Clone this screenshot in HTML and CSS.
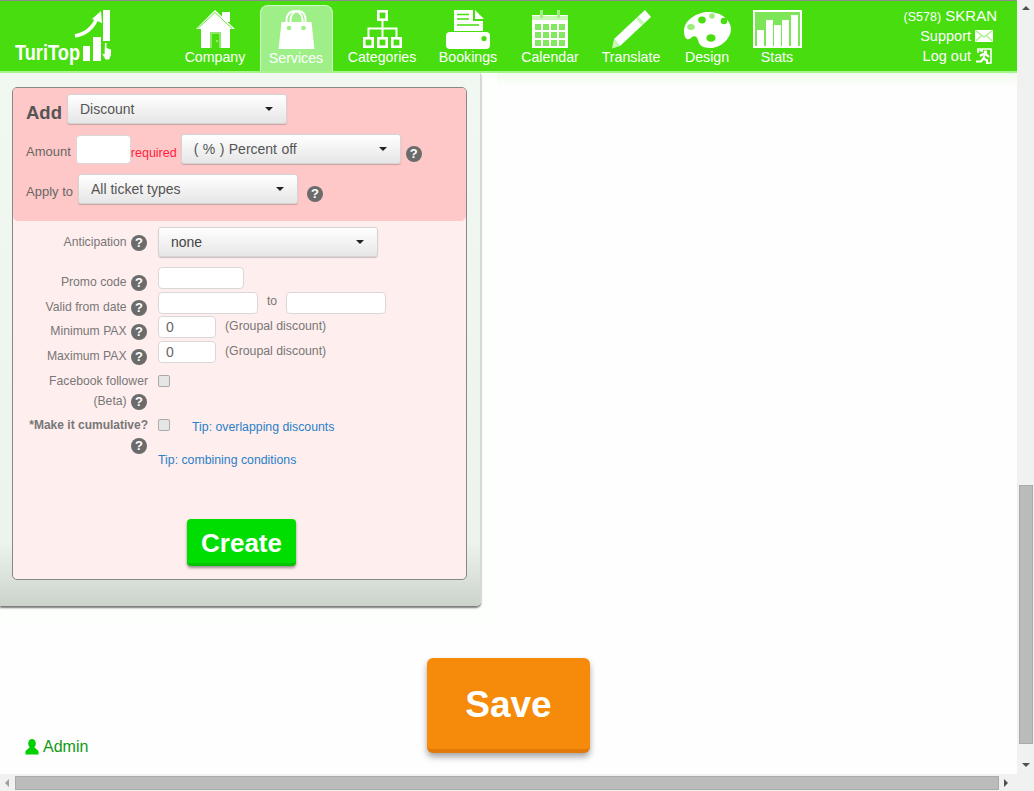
FILE: index.html
```html
<!DOCTYPE html>
<html lang="en">
<head>
    <meta charset="UTF-8">
    <title>TuriTop - Services</title>
    <link rel="stylesheet" href="styles.css">
</head>
<body>
<div class="window">
    <div class="page">
        <header class="topbar">
            <a class="logo">
                <svg width="100" height="60" viewBox="14 7 100 60">
                    <text x="15" y="59.500" textLength="65" lengthAdjust="spacingAndGlyphs" class="logo-text">TuriTop</text>
                    <rect x="83" y="46" width="7" height="15" fill="#fff"/>
                    <rect x="93" y="37" width="8" height="24" fill="#fff"/>
                    <rect x="103" y="10" width="7" height="31" fill="#fff"/>
                    <path d="M75 36C86 34 93 28 97 18" fill="none" stroke="#fff" stroke-width="3.500"/>
                    <path d="M92 19L101 11L102 23Z" fill="#fff"/>
                    <path d="M105 43h1.500v5l4.500 1.500V55l-2 4.500h-3.500l-3.500-6 2.500 1Z" fill="#fff"/>
                </svg>
            </a>
            <nav class="mainnav">
                <a class="navitem">
                    <svg width="60" height="40" viewBox="185 9 60 40">
                        <rect x="222" y="12" width="8" height="10" fill="#fff"/>
                        <path d="M215 10L235 29H196Z" fill="#fff"/>
                        <path d="M198 28.500L215 12.500L232 28.500" fill="none" stroke="#47dd0e" stroke-width=".8"/>
                        <rect x="201" y="29" width="29" height="19" fill="#fff"/>
                        <rect x="210" y="32" width="11" height="16" fill="#8fe86c"/>
                        <rect x="212" y="34" width="7" height="14" fill="#47dd0e"/>
                        <circle cx="217" cy="41" r=".8" fill="#fff"/>
                    </svg>
                    <span>Company</span>
                </a>
                <a class="navitem navitem-active">
                    <svg width="60" height="40" viewBox="266.500 9 60 40">
                        <path d="M287 24V20C287 14 291 11 295 11C299 11 303 14 303 20V24" fill="none" stroke="#fff" stroke-width="2"/>
                        <path d="M291 24V20C291 14 295 11 299 11C303 11 306 14 306 20V24" fill="none" stroke="#fff" stroke-width="2"/>
                        <path d="M282 22H312L315 50H279Z" fill="#fff"/>
                        <circle cx="289.500" cy="28" r="2.300" fill="#9fef88"/>
                        <circle cx="304" cy="28" r="2.300" fill="#9fef88"/>
                    </svg>
                    <span>Services</span>
                </a>
                <a class="navitem">
                    <svg width="60" height="40" viewBox="352 9 60 40">
                        <g fill="none" stroke="#fff" stroke-width="2.600">
                            <rect x="378.300" y="11.300" width="8.400" height="8.400"/>
                            <rect x="364.300" y="38.300" width="8.400" height="8.400"/>
                            <rect x="378.300" y="38.300" width="8.400" height="8.400"/>
                            <rect x="392.300" y="38.300" width="8.400" height="8.400"/>
                        </g>
                        <path d="M382.500 21V37M368.500 37V28.500H396.500V37" fill="none" stroke="#fff" stroke-width="2"/>
                    </svg>
                    <span>Categories</span>
                </a>
                <a class="navitem">
                    <svg width="60" height="40" viewBox="438 9 60 40">
                        <path d="M454 10H473V21H483V31H454Z" fill="#fff"/>
                        <path d="M475 10L484 19H475Z" fill="#fff"/>
                        <path d="M457 14.500H469M457 19H469M457 25H479" stroke="#47dd0e" stroke-width="1.500"/>
                        <rect x="446" y="32" width="44" height="17" rx="4" fill="#fff"/>
                        <circle cx="484" cy="38.500" r="2.600" fill="#47dd0e"/>
                    </svg>
                    <span>Bookings</span>
                </a>
                <a class="navitem">
                    <svg width="60" height="40" viewBox="520 9 60 40">
                        <rect x="532" y="15" width="36" height="33" fill="#fff"/>
                        <rect x="532" y="16" width="36" height="4" fill="#c8f7b6"/>
                        <rect x="540" y="10" width="3" height="8" fill="#a4ee88"/>
                        <rect x="557" y="10" width="3" height="8" fill="#a4ee88"/>
                        <g fill="#84e760">
                            <rect x="535" y="24" width="6" height="6"/><rect x="543" y="24" width="6" height="6"/><rect x="551" y="24" width="6" height="6"/><rect x="559" y="24" width="6" height="6"/>
                            <rect x="535" y="32" width="6" height="6"/><rect x="543" y="32" width="6" height="6"/><rect x="551" y="32" width="6" height="6"/><rect x="559" y="32" width="6" height="6"/>
                            <rect x="535" y="40" width="6" height="6"/><rect x="543" y="40" width="6" height="6"/><rect x="551" y="40" width="6" height="6"/><rect x="559" y="40" width="6" height="6"/>
                        </g>
                    </svg>
                    <span>Calendar</span>
                </a>
                <a class="navitem">
                    <svg width="60" height="40" viewBox="601 9 60 40">
                        <path d="M645 10L651 17L620 46L614 39Z" fill="#fff"/>
                        <path d="M638.500 16.500L644.500 23L642 25.500L636 19Z" fill="#c8f7b6"/>
                        <path d="M614 39L620 46L612 48.500Z" fill="#c8f7b6"/>
                    </svg>
                    <span>Translate</span>
                </a>
                <a class="navitem">
                    <svg width="60" height="40" viewBox="677 9 60 40">
                        <path d="M684 31C684 20 697 12 709 12C722 12 731 21 731 29C731 39 720 48 711 48C702 48 699 45 698 40C697 36 694 35 691 38C688 41 684 39 684 31Z" fill="#fff"/>
                        <ellipse cx="702" cy="20" rx="3.800" ry="3.400" fill="#47dd0e"/>
                        <circle cx="712" cy="16" r="2.800" fill="#9bec7c"/>
                        <circle cx="724" cy="21" r="3.300" fill="#47dd0e"/>
                        <ellipse cx="691" cy="27" rx="3.800" ry="3" fill="#9bec7c"/>
                        <ellipse cx="711" cy="38" rx="4.600" ry="3.800" fill="#47dd0e"/>
                    </svg>
                    <span>Design</span>
                </a>
                <a class="navitem">
                    <svg width="60" height="40" viewBox="747 9 60 40">
                        <rect x="754" y="11" width="47" height="36" fill="#7ce558" stroke="#fff" stroke-width="2"/>
                        <g fill="#fff">
                            <rect x="757" y="30" width="7" height="16"/>
                            <rect x="766" y="20" width="7" height="26"/>
                            <rect x="774" y="25" width="7" height="21"/>
                            <rect x="782" y="20" width="7" height="26"/>
                            <rect x="791" y="15" width="7" height="31"/>
                        </g>
                    </svg>
                    <span>Stats</span>
                </a>
            </nav>
            <div class="userbox">
                <div><span class="usercode">(S578)</span> SKRAN</div>
                <a class="userlink userlink-first">Support
                    <svg width="18" height="12" viewBox="0 0 18 12">
                        <rect width="18" height="12" rx="1" fill="#fff"/>
                        <path d="M1 1L9 7L17 1M1 11L6.500 5.500M17 11L11.500 5.500" fill="none" stroke="#a6f08a" stroke-width="1.200"/>
                    </svg>
                </a>
                <a class="userlink">Log out
                    <svg width="18" height="16" viewBox="0 0 18 16">
                        <path d="M3 5V1H16V15H12" fill="none" stroke="#fff" stroke-width="1.600"/>
                        <path d="M3 3L8 1V4Z" fill="#fff"/>
                        <circle cx="10.500" cy="4" r="1.800" fill="#fff"/>
                        <path d="M5 8L8 6H11L14 9M10 6L8.500 10.500L12 12.500V16M8.500 10.500L6 13.500H1" fill="none" stroke="#fff" stroke-width="2.200"/>
                    </svg>
                </a>
            </div>
        </header>

        <main class="content">
            <div class="panel-wrap">
                <section class="panel">
                    <form class="addform">
                        <div class="addform-top">
                            <div class="toprow">
                                <span class="add-title">Add</span>
                                <div class="select">Discount<i class="caret"></i></div>
                            </div>
                            <div class="toprow">
                                <label class="toplabel">Amount</label>
                                <input class="input input-amount" type="text">
                                <span class="required">required</span>
                                <div class="select select-percent">(&nbsp;%&nbsp;)&nbsp;Percent off<i class="caret"></i></div>
                                <span class="help help-top">?</span>
                            </div>
                            <div class="toprow">
                                <label class="toplabel">Apply to</label>
                                <div class="select">All ticket types<i class="caret"></i></div>
                                <span class="help help-apply">?</span>
                            </div>
                        </div>

                        <div class="addform-body">
                            <div class="row row-anticipation">
                                <div class="rowlabel">Anticipation <span class="help">?</span></div>
                                <div class="select select-dark">none<i class="caret"></i></div>
                            </div>
                            <div class="row row-promo">
                                <div class="rowlabel">Promo code <span class="help">?</span></div>
                                <input class="input input-code" type="text">
                            </div>
                            <div class="row">
                                <div class="rowlabel">Valid from date <span class="help">?</span></div>
                                <input class="input input-date" type="text">
                                <span class="to">to</span>
                                <input class="input input-date" type="text">
                            </div>
                            <div class="row row-min">
                                <div class="rowlabel">Minimum PAX <span class="help">?</span></div>
                                <input class="input input-pax" type="text" value="0">
                                <span class="note">(Groupal discount)</span>
                            </div>
                            <div class="row">
                                <div class="rowlabel">Maximum PAX <span class="help">?</span></div>
                                <input class="input input-pax" type="text" value="0">
                                <span class="note">(Groupal discount)</span>
                            </div>
                            <div class="row row-check row-facebook">
                                <div class="rowlabel">
                                    <div class="labelline">Facebook follower</div>
                                    <div class="labelline">(Beta) <span class="help">?</span></div>
                                </div>
                                <span class="checkbox"></span>
                            </div>
                            <div class="row row-check row-cumulative">
                                <div class="rowlabel">
                                    <div class="labelline"><b>*Make it cumulative?</b></div>
                                    <div class="labelline"><span class="help">?</span></div>
                                </div>
                                <div class="cumulative-field">
                                    <div class="cumulative-top">
                                        <span class="checkbox"></span>
                                        <a class="tip tip-first">Tip: overlapping discounts</a>
                                    </div>
                                    <a class="tip tip-second">Tip: combining conditions</a>
                                </div>
                            </div>
                            <button type="button" class="btn-create">Create</button>
                        </div>
                    </form>
                </section>
            </div>

            <div class="bottomrow">
                <a class="admin">
                    <svg width="14" height="16" viewBox="0 0 14 16">
                        <ellipse cx="7" cy="4.500" rx="3.800" ry="4.500" fill="#00d000"/>
                        <path d="M5 8L0.500 12V15.500H13.500V12L9 8Z" fill="#00d000"/>
                    </svg>
                    Admin
                </a>
                <button type="button" class="btn-save">Save</button>
            </div>
        </main>
    </div>

    <div class="vscroll">
        <i class="arrow arrow-up"></i>
        <div class="vscroll-track"><div class="vscroll-thumb"></div></div>
        <i class="arrow arrow-down"></i>
    </div>
    <div class="hscroll">
        <i class="arrow arrow-left"></i>
        <div class="hscroll-thumb"></div>
        <i class="arrow arrow-right"></i>
    </div>
    <div class="corner"></div>
</div>
</body>
</html>
```

FILE: styles.css
```css
html, body {
    margin: 0;
    padding: 0;
    height: 100%;
    overflow: hidden;
}

body {
    font-family: "Liberation Sans", Arial, sans-serif;
    background-color: #fefefe;
}

a {
    text-decoration: none;
}

.window {
    width: 1034px;
    height: 791px;
    display: grid;
    grid-template-columns: 1017px 17px;
    grid-template-rows: 774px 17px;
}

.page {
    overflow: hidden;
}

/* top bar */

.topbar {
    display: flex;
    height: 70px;
    border-top: 1px solid #8c8c8c;
    border-bottom: 2px solid #a4f58a;
    background-color: #47dd0e;
    color: #fff;
}

.logo {
    display: block;
    width: 175px;
    flex: none;
    box-sizing: border-box;
    padding: 6px 0 0 14px;
}

.logo-text {
    font-size: 22px;
    font-weight: bold;
    fill: #fff;
}

.mainnav {
    display: grid;
    grid-template-columns: 80px 82px 90px 82px 82px 80px 72px 68px;
    flex: none;
}

.navitem {
    display: flex;
    flex-direction: column;
    align-items: center;
    justify-self: center;
    width: 80px;
    padding-top: 8px;
    font-size: 14.200px;
    line-height: 16px;
    color: #fff;
}

.navitem svg {
    display: block;
}

.navitem-active {
    box-sizing: border-box;
    width: 73px;
    height: 66px;
    margin-top: 4px;
    padding-top: 4px;
    background-color: #9fef88;
    border: 1px solid #d3f9c6;
    border-bottom: none;
    border-radius: 8px 8px 0 0;
}

.navitem-active svg {
    margin-top: -1px;
}

.navitem-active span {
    margin-top: 1px;
}

.userbox {
    margin-left: auto;
    padding: 5px 20px 0 0;
    display: flex;
    flex-direction: column;
    align-items: flex-end;
    font-size: 15px;
    line-height: 20px;
}

.usercode {
    font-size: 12.500px;
}

.userlink {
    display: flex;
    align-items: center;
    gap: 4px;
    padding-right: 4px;
    font-size: 14.500px;
    color: #fff;
}

.userlink-first {
    margin-top: -1px;
}

/* form panel */

.content {
    height: 701px;
    background: linear-gradient(#f1fbec, #fefefe 14px);
}

.panel-wrap {
    width: 497px;
    height: 551px;
    box-sizing: border-box;
    background-color: #fdfffc;
    border-radius: 0 0 6px 0;
}

.panel {
    width: 481px;
    height: 533px;
    box-sizing: border-box;
    padding: 14px 13px 0 12px;
    background: linear-gradient(#f1f8f1 0%, #edf4ed 88%, #ccd3cb 100%);
    border-right: 1px solid #d2d8d2;
    border-radius: 0 0 5px 0;
    box-shadow: 0 2px 2px #777;
}

.addform {
    height: 493px;
    box-sizing: border-box;
    border: 1px solid #888;
    border-radius: 5px;
    background-color: #ffeeee;
    overflow: hidden;
}

.addform-top {
    height: 133px;
    box-sizing: border-box;
    padding: 6px 13px 0;
    background-color: #ffc8c8;
    border-radius: 0 0 5px 5px;
}

.toprow {
    display: flex;
    align-items: flex-start;
    height: 30px;
    margin-bottom: 10px;
    color: #666;
}

.add-title {
    width: 41px;
    margin-top: 9px;
    font-size: 18.500px;
    line-height: 20px;
    font-weight: bold;
    color: #555;
}

.toplabel {
    margin-top: 10px;
    margin-right: 5px;
    font-size: 13px;
    line-height: 16px;
}

.select {
    display: flex;
    align-items: center;
    justify-content: space-between;
    box-sizing: border-box;
    width: 220px;
    height: 30px;
    padding: 0 13px 0 12px;
    font-size: 14px;
    color: #555;
    background: linear-gradient(#ffffff, #e6e6e6);
    border: 1px solid #d4d4d4;
    border-radius: 3px;
    box-shadow: 0 1px 1px rgba(0, 0, 0, 0.2);
}

.select-dark {
    color: #444;
}

.select-percent {
    word-spacing: 0.500px;
}

.caret {
    width: 0;
    height: 0;
    border-left: 4px solid transparent;
    border-right: 4px solid transparent;
    border-top: 4px solid #222;
}

.input {
    box-sizing: border-box;
    height: 22px;
    margin: 0;
    padding: 0 7px;
    font-family: inherit;
    font-size: 14px;
    color: #666;
    background-color: #fff;
    border: 1px solid #d8d8d8;
    border-radius: 4px;
}

.input-amount {
    width: 55px;
    height: 29px;
    margin-top: 1px;
}

.required {
    width: 50px;
    margin-top: 11px;
    font-size: 12.500px;
    line-height: 16px;
    color: #ff2040;
}

.help {
    display: inline-block;
    width: 16px;
    height: 16px;
    border-radius: 50%;
    background-color: #6b6b6b;
    color: #fff;
    font-size: 13px;
    font-weight: bold;
    line-height: 16px;
    text-align: center;
    vertical-align: middle;
}

.help-top {
    margin: 12px 0 0 5px;
}

.help-apply {
    margin: 12px 0 0 9px;
}

/* lower rows */

.addform-body {
    padding-top: 6px;
    color: #777;
    font-size: 12.200px;
}

.row {
    display: flex;
    align-items: flex-start;
    height: 22px;
    margin-top: 3px;
}

.rowlabel {
    width: 135px;
    flex: none;
    margin-right: 10px;
    padding-right: 1px;
    box-sizing: border-box;
    text-align: right;
    padding-top: 7px;
    line-height: 16px;
}

.rowlabel .help {
    margin-left: 1px;
}

.row-anticipation {
    height: 30px;
    margin-top: 0;
}

.row-anticipation .rowlabel {
    padding-top: 7px;
}

.row-promo {
    margin-top: 10px;
}

.row-min {
    margin-top: 2px;
}

.row-facebook {
    height: 35px;
    margin-top: 12px;
}

.row-cumulative {
    height: 60px;
    margin-top: 9px;
}

.row-check .rowlabel {
    padding-top: 0;
    padding-right: 0;
}

.row-check .help {
    margin-right: 1px;
}

.row-check .labelline {
    height: 16px;
    line-height: 13px;
}

.row-check .labelline + .labelline {
    margin-top: 3px;
}

.row-check b {
    font-size: 12px;
}

.input-code {
    width: 86px;
}

.input-date {
    width: 100px;
}

.input-pax {
    width: 58px;
}

.to {
    width: 28px;
    text-align: center;
    line-height: 18px;
}

.note {
    margin-left: 9px;
    font-size: 12.300px;
    line-height: 20px;
}

.checkbox {
    display: block;
    box-sizing: border-box;
    width: 12px;
    height: 12px;
    flex: none;
    background-color: #e6e6e6;
    border: 1px solid #aaa;
    border-radius: 2px;
}

.cumulative-top {
    display: flex;
    height: 34px;
}

.tip {
    color: #2a80c8;
    font-size: 12.300px;
    line-height: 14px;
}

.tip-first {
    margin: 1px 0 0 22px;
}

.tip-second {
    display: block;
}

.btn-create {
    display: block;
    box-sizing: border-box;
    width: 109px;
    height: 47px;
    margin: 40px 0 0 174px;
    padding: 4px 0 0;
    font-family: inherit;
    font-size: 26px;
    font-weight: bold;
    color: #fff;
    background-color: #00dd00;
    border: none;
    border-bottom: 3px solid #00c400;
    border-radius: 4px;
    box-shadow: 0 2px 3px rgba(0, 0, 0, 0.4);
}

/* bottom */

.bottomrow {
    display: flex;
    align-items: flex-end;
    margin-top: 34px;
}

.admin {
    display: flex;
    align-items: center;
    gap: 4px;
    width: 402px;
    margin-left: 25px;
    margin-bottom: -4px;
    font-size: 16px;
    line-height: 20px;
    color: #119a11;
}

.btn-save {
    box-sizing: border-box;
    width: 163px;
    height: 95px;
    padding: 3px 0 0;
    font-family: inherit;
    font-size: 37px;
    font-weight: bold;
    color: #fff;
    background-color: #f58a0b;
    border: none;
    border-bottom: 4px solid #e07a08;
    border-radius: 6px;
    box-shadow: 0 4px 6px rgba(0, 0, 0, 0.35);
}

/* scrollbars */

.vscroll {
    display: flex;
    flex-direction: column;
    align-items: center;
    background-color: #f1f1f1;
}

.vscroll-track {
    flex: 1;
    width: 100%;
    display: flex;
    flex-direction: column;
    justify-content: flex-end;
    align-items: center;
    padding-bottom: 19px;
}

.vscroll-thumb {
    box-sizing: border-box;
    width: 14px;
    height: 259px;
    background-color: #bbb;
    border: 1px solid #aaa;
}

.hscroll {
    display: flex;
    align-items: center;
    background-color: #f1f1f1;
}

.hscroll-thumb {
    box-sizing: border-box;
    width: 984px;
    height: 14px;
    margin: 0 5px 0 6px;
    background-color: #bbb;
    border: 1px solid #aaa;
}

.corner {
    background-color: #f1f1f1;
}

.arrow {
    display: block;
    width: 0;
    height: 0;
    flex: none;
}

.arrow-up {
    margin-top: 6px;
    border-left: 4px solid transparent;
    border-right: 4px solid transparent;
    border-bottom: 4px solid #505050;
}

.arrow-down {
    margin-bottom: 7px;
    border-left: 4px solid transparent;
    border-right: 4px solid transparent;
    border-top: 4px solid #505050;
}

.arrow-left {
    margin-left: 5px;
    border-top: 4px solid transparent;
    border-bottom: 4px solid transparent;
    border-right: 4px solid #a0a0a0;
}

.arrow-right {
    border-top: 4px solid transparent;
    border-bottom: 4px solid transparent;
    border-left: 4px solid #505050;
}
```
